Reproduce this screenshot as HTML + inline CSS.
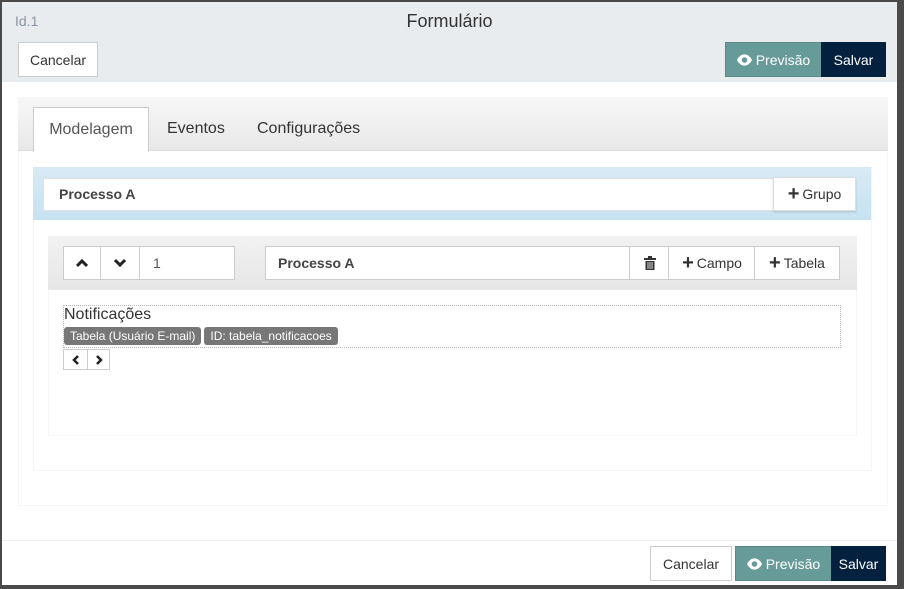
<!DOCTYPE html>
<html><head><meta charset="utf-8"><style>
*{box-sizing:border-box;margin:0;padding:0}
body{width:904px;height:589px;background:#4a4a4a;font-family:"Liberation Sans",sans-serif;font-size:14px;color:#333;position:relative;overflow:hidden}
.modal{position:absolute;left:2px;top:2px;width:895px;height:583px;background:#fff}
.hdr{position:absolute;left:0;top:0;width:895px;height:80px;background:#e9ecef}
.abs{position:absolute}
.btn{position:absolute;border:1px solid #ccc;background:#fff;display:flex;align-items:center;justify-content:center;font-size:14px;color:#333}
.prev{background:#679b99;color:#fff;border:1px solid #5a8a88}
.salv{background:#03213f;color:#fff;border:1px solid #03213f}
.line{position:absolute;border:1px solid #f5f5f5}
.tag{display:inline-block;background:#777;color:#fff;font-size:12px;padding:2px 6px;border-radius:3px;margin-right:3px}
svg{display:inline-block}
</style></head><body>
<div class="modal">
<div class="hdr"></div>
<div class="abs" style="left:13px;top:11px;color:#8a94a6;font-size:14px">Id.1</div>
<div class="abs" style="left:0;width:895px;top:9px;text-align:center;font-size:18px;color:#333">Formulário</div>
<div class="btn" style="left:16px;top:40px;width:80px;height:35px">Cancelar</div>
<div class="btn prev" style="left:723px;top:40px;width:97px;height:35px"><svg width="15" height="12" viewBox="0 0 16 12"><path d="M0 6C2 2 5 0 8 0s6 2 8 6c-2 4-5 6-8 6S2 10 0 6z" fill="#fff"/><circle cx="8" cy="6" r="3" fill="#679b99"/></svg>&nbsp;Previsão</div>
<div class="btn salv" style="left:819px;top:40px;width:65px;height:35px">Salvar</div>

<div class="line" style="left:16px;top:95px;width:870px;height:409px"></div>
<div class="abs" style="left:16px;top:95px;width:870px;height:54px;background:linear-gradient(#f7f7f7,#e8e8e8);border-bottom:1px solid #ddd"></div>
<div class="abs" style="left:31px;top:105px;width:116px;height:45px;background:#fff;border:1px solid #ccc;border-bottom:none;display:flex;align-items:center;justify-content:center;font-size:16px;color:#555">Modelagem</div>
<div class="abs" style="left:165px;top:118px;font-size:16px">Eventos</div>
<div class="abs" style="left:255px;top:118px;font-size:16px">Configurações</div>

<div class="line" style="left:31px;top:165px;width:839px;height:304px"></div>
<div class="abs" style="left:31px;top:165px;width:838px;height:53px;background:linear-gradient(#d8eaf5,#c6e2f1)"></div>
<div class="abs" style="left:41px;top:176px;width:813px;height:33px;background:#fff;border:1px solid #e0e0e0"></div>
<div class="abs" style="left:57px;top:184px;font-weight:bold;font-size:14px;color:#444">Processo A</div>
<div class="btn" style="left:771px;top:175px;width:83px;height:34px;border-color:#ddd;box-shadow:0 1px 2px rgba(0,0,0,.15)"><b style="font-size:20px;margin-right:3px">+</b>Grupo</div>

<div class="line" style="left:46px;top:234px;width:809px;height:200px"></div>
<div class="abs" style="left:46px;top:234px;width:809px;height:54px;background:linear-gradient(#f2f2f2,#e6e6e6)"></div>
<div class="btn" style="left:61px;top:244px;width:38px;height:34px"><svg width="12" height="10" viewBox="0 0 12 10"><path d="M1 8L6 3l5 5" stroke="#222" stroke-width="3" fill="none"/></svg></div>
<div class="btn" style="left:98px;top:244px;width:40px;height:34px"><svg width="12" height="10" viewBox="0 0 12 10"><path d="M1 2l5 5 5-5" stroke="#222" stroke-width="3" fill="none"/></svg></div>
<div class="btn" style="left:137px;top:244px;width:96px;height:34px;justify-content:flex-start;padding-left:13px;color:#555">1</div>
<div class="btn" style="left:263px;top:244px;width:366px;height:34px;justify-content:flex-start;padding-left:12px;font-weight:bold;color:#444">Processo A</div>
<div class="btn" style="left:627px;top:244px;width:41px;height:34px"><svg width="12" height="14" viewBox="0 0 12 14"><rect x="0" y="2" width="12" height="2" fill="#333"/><rect x="4" y="0" width="4" height="2" fill="#333"/><path d="M1.5 5h9v9h-9z" fill="#333"/><path d="M4 6v7M6 6v7M8 6v7" stroke="#fff" stroke-width="0.8"/></svg></div>
<div class="btn" style="left:666px;top:244px;width:88px;height:34px"><b style="font-size:20px;margin-right:3px">+</b>Campo</div>
<div class="btn" style="left:752px;top:244px;width:86px;height:34px"><b style="font-size:20px;margin-right:3px">+</b>Tabela</div>

<div class="abs" style="left:61px;top:303px;width:778px;height:43px;border:1px dotted #bbb"></div>
<div class="abs" style="left:62px;top:304px;font-size:16px;color:#333">Notificações</div>
<div class="abs" style="left:62px;top:325px"><span class="tag">Tabela (Usuário E-mail)</span><span class="tag">ID: tabela_notificacoes</span></div>
<div class="btn" style="left:61px;top:347px;width:25px;height:21px"><svg width="8" height="10" viewBox="0 0 8 10"><path d="M6 1L2 5l4 4" stroke="#222" stroke-width="2.5" fill="none"/></svg></div>
<div class="btn" style="left:85px;top:347px;width:23px;height:21px"><svg width="8" height="10" viewBox="0 0 8 10"><path d="M2 1l4 4-4 4" stroke="#222" stroke-width="2.5" fill="none"/></svg></div>

<div class="abs" style="left:0;top:538px;width:895px;border-top:1px solid #eee"></div>
<div class="btn" style="left:648px;top:544px;width:82px;height:35px">Cancelar</div>
<div class="btn prev" style="left:733px;top:544px;width:97px;height:35px"><svg width="15" height="12" viewBox="0 0 16 12"><path d="M0 6C2 2 5 0 8 0s6 2 8 6c-2 4-5 6-8 6S2 10 0 6z" fill="#fff"/><circle cx="8" cy="6" r="3" fill="#679b99"/></svg>&nbsp;Previsão</div>
<div class="btn salv" style="left:829px;top:544px;width:55px;height:35px">Salvar</div>
</div>
</body></html>
